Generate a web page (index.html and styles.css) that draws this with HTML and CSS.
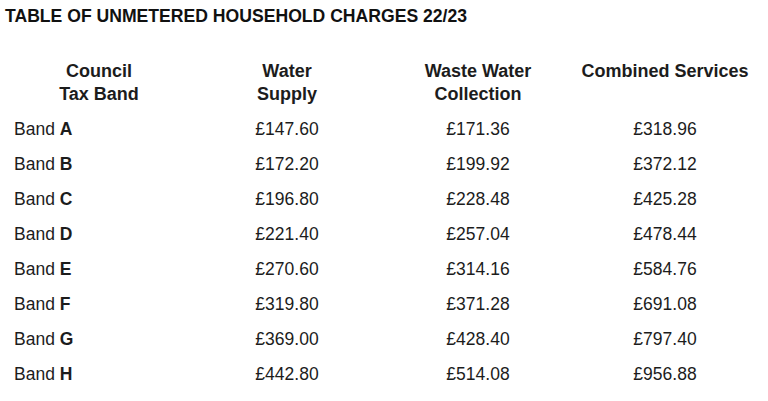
FILE: index.html
```html
<!DOCTYPE html>
<html lang="en">
<head>
<meta charset="utf-8">
<title>Unmetered Household Charges 22/23</title>
<link rel="stylesheet" href="styles.css">
</head>
<body>
<h1 class="title">TABLE OF UNMETERED HOUSEHOLD CHARGES 22/23</h1>
<div class="charges">
  <div class="head">Council<br>Tax Band</div>
  <div class="head">Water<br>Supply</div>
  <div class="head">Waste Water<br>Collection</div>
  <div class="head">Combined Services</div>

  <div class="band">Band <b>A</b></div><div class="val">£147.60</div><div class="val">£171.36</div><div class="val">£318.96</div>
  <div class="band">Band <b>B</b></div><div class="val">£172.20</div><div class="val">£199.92</div><div class="val">£372.12</div>
  <div class="band">Band <b>C</b></div><div class="val">£196.80</div><div class="val">£228.48</div><div class="val">£425.28</div>
  <div class="band">Band <b>D</b></div><div class="val">£221.40</div><div class="val">£257.04</div><div class="val">£478.44</div>
  <div class="band">Band <b>E</b></div><div class="val">£270.60</div><div class="val">£314.16</div><div class="val">£584.76</div>
  <div class="band">Band <b>F</b></div><div class="val">£319.80</div><div class="val">£371.28</div><div class="val">£691.08</div>
  <div class="band">Band <b>G</b></div><div class="val">£369.00</div><div class="val">£428.40</div><div class="val">£797.40</div>
  <div class="band">Band <b>H</b></div><div class="val">£442.80</div><div class="val">£514.08</div><div class="val">£956.88</div>
</div>
</body>
</html>
```
FILE: styles.css
```css
html, body {
  margin: 0;
  padding: 0;
  background: #ffffff;
}
body {
  font-family: "Liberation Sans", Arial, sans-serif;
  color: #1c1c1c;
  padding: 5px 5px 0 5px;
}
.title {
  margin: 0;
  font-size: 17.6px;
  line-height: 22px;
  font-weight: bold;
  color: #111111;
}
.charges {
  display: grid;
  grid-template-columns: 188px 188px 194px 180px;
  margin-top: 33px;
  font-size: 17.5px;
}
.head {
  font-size: 18px;
  font-weight: bold;
  text-align: center;
  line-height: 22.5px;
  padding-bottom: 7px;
}
.band {
  padding-left: 9px;
  line-height: 35px;
}
.val {
  text-align: center;
  line-height: 35px;
}
```
